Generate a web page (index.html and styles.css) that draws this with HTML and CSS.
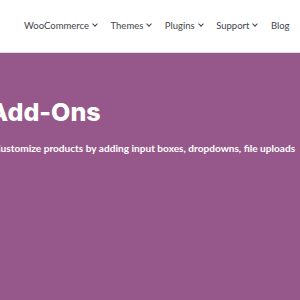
FILE: index.html
```html
<!DOCTYPE html>
<html lang="en">
<head>
  <meta charset="UTF-8">
  <meta name="viewport" content="width=device-width, initial-scale=1.0">
  <title>Product Add-Ons</title>
  <link rel="stylesheet" href="styles.css">
</head>
<body>
  <header class="site-header">
    <nav class="main-nav">
      <a class="nav-item" href="#">WooCommerce <span class="chev"></span></a>
      <a class="nav-item" href="#">Themes <span class="chev"></span></a>
      <a class="nav-item" href="#">Plugins <span class="chev"></span></a>
      <a class="nav-item" href="#">Support <span class="chev"></span></a>
      <a class="nav-item" href="#">Blog</a>
    </nav>
  </header>
  <section class="hero">
    <h1>Add-Ons</h1>
    <p>Customize products by adding input boxes, dropdowns, file uploads</p>
  </section>
</body>
</html>
```

FILE: styles.css
```css
html, body {
  margin: 0;
  padding: 0;
  overflow: hidden;
}
body {
  font-family: Lato, "Open Sans", Arial, sans-serif;
  background-color: #96588a;
  height: 300px;
}
.site-header {
  background-color: #fff;
  height: 52px;
  border-bottom: 1px solid #e6dce4;
}
.main-nav {
  display: flex;
  gap: 13.5px;
  padding: 20px 0 0 24px;
  white-space: nowrap;
}
.nav-item {
  color: #43454b;
  text-decoration: none;
  font-size: 9.5px;
  display: flex;
  align-items: center;
  gap: 4px;
}
.chev {
  width: 3px;
  height: 3px;
  border-right: 1px solid #43454b;
  border-bottom: 1px solid #43454b;
  transform: rotate(45deg);
  margin-top: -3px;
}
.hero {
  color: #fff;
  padding-top: 43px;
  white-space: nowrap;
  overflow: hidden;
}
.hero h1 {
  margin: 0 0 0 -11px;
  font-family: Inter, Lato, sans-serif;
  font-weight: 800;
  font-size: 25px;
  line-height: 32px;
}
.hero p {
  margin: 14px 0 0 -6px;
  font-size: 10.1px;
  font-weight: bold;
}
```
